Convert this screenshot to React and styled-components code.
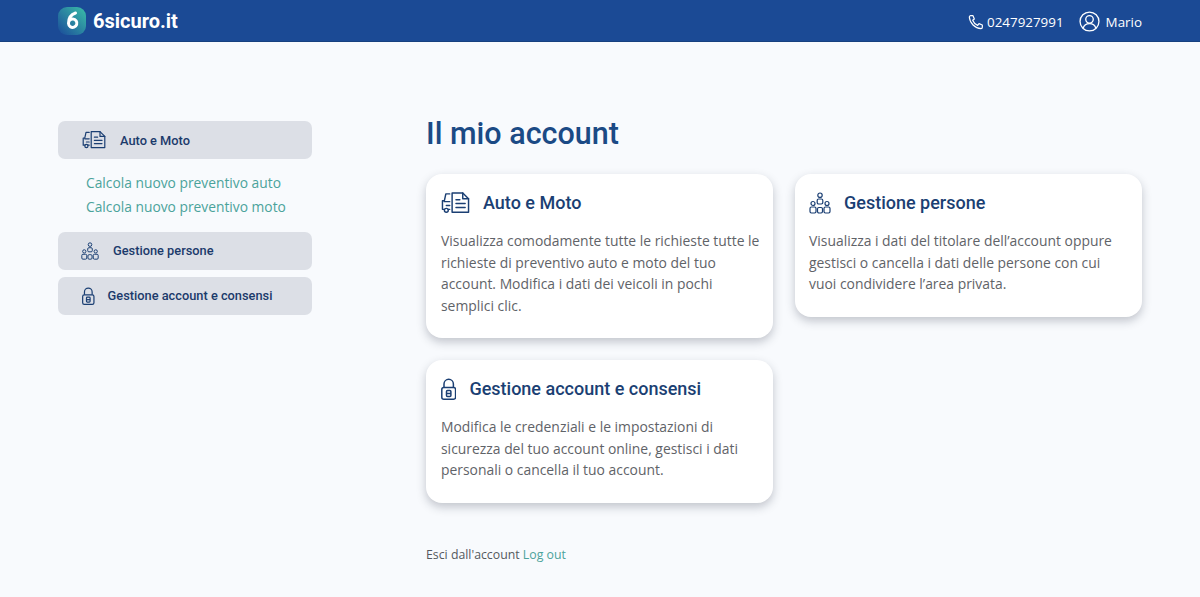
import React from 'react';
import styled, { createGlobalStyle } from 'styled-components';

const GlobalStyle = createGlobalStyle`
  html, body {
    margin: 0;
    padding: 0;
    background: #f8fafd;
  }
  body {
    font-family: "Open Sans", "Noto Sans", sans-serif;
  }
`;

const Page = styled.div`
  width: 1200px;
  height: 597px;
  overflow: hidden;
  background: #f8fafd;
`;

const Header = styled.header`
  height: 42px;
  box-sizing: border-box;
  background: #1b4a95;
  border-bottom: 1px solid #17407f;
  padding: 0 58px;
  display: flex;
  align-items: center;
  justify-content: space-between;
`;

const Brand = styled.div`
  display: flex;
  align-items: center;
  gap: 7px;
  color: #fff;
  font-family: "Roboto", sans-serif;
  font-weight: 700;
  font-size: 20px;
`;

const HeaderRight = styled.div`
  display: flex;
  align-items: center;
  color: #fff;
  font-size: 13.4px;
  gap: 15px;
  margin-top: 2px;
`;

const HeaderItem = styled.div`
  display: flex;
  align-items: center;
  gap: ${props => props.$gap}px;
`;

const Body = styled.main`
  display: flex;
  padding: 0 58px;
`;

const Sidebar = styled.aside`
  width: 254px;
  flex-shrink: 0;
  padding-top: 79px;
  margin-right: 114px;
`;

const NavButton = styled.div`
  height: 38px;
  border-radius: 7px;
  background: #dcdfe6;
  display: flex;
  align-items: center;
  gap: ${props => props.$gap}px;
  padding-left: ${props => props.$pad}px;
  margin-bottom: 7px;
  color: #1b3a6b;
  font-family: "Roboto", sans-serif;
  font-weight: 500;
  font-size: 12.8px;
`;

const SubLinks = styled.div`
  display: flex;
  flex-direction: column;
  gap: 3px;
  padding: 6px 0 14.5px 28px;
`;

const SubLink = styled.a`
  color: #4ba39b;
  font-size: 13.8px;
  line-height: 21px;
`;

const Content = styled.section`
  width: 716px;
  padding-top: 71px;
`;

const Title = styled.h1`
  margin: 0 0 19px;
  color: #1b4a85;
  font-family: "Roboto", sans-serif;
  font-weight: 500;
  font-size: 30.5px;
  line-height: 42px;
`;

const Grid = styled.div`
  display: grid;
  grid-template-columns: 347px 347px;
  gap: 22px;
  align-items: start;
`;

const Card = styled.article`
  background: #fff;
  border-radius: 16px;
  box-shadow: 0 4px 10px rgba(30, 40, 60, 0.25);
  padding: 15px 13px 22px ${props => props.$pad}px;
`;

const CardHead = styled.div`
  display: flex;
  align-items: center;
  gap: ${props => props.$gap}px;
  height: 27px;
  margin-bottom: 14px;
`;

const CardTitle = styled.h2`
  margin: 0;
  color: #1b3f73;
  font-family: "Roboto", sans-serif;
  font-weight: 500;
  font-size: 18px;
`;

const CardText = styled.p`
  margin: 0;
  color: #5f6368;
  font-size: 13.9px;
  line-height: 21.5px;
`;

const Footer = styled.div`
  margin-top: 43px;
  color: #55595e;
  font-size: 12.3px;
`;

const FooterLink = styled.a`
  color: #4ba39b;
`;

const Logo = () => (
  <svg width="28" height="28" viewBox="0 0 28 28">
    <defs>
      <linearGradient id="lg" x1="0" y1="1" x2="1" y2="0">
        <stop offset="0" stopColor="#1a4a9a" />
        <stop offset="1" stopColor="#3bbfa8" />
      </linearGradient>
    </defs>
    <rect width="28" height="28" rx="9" fill="url(#lg)" />
    <path d="M17.500 6c-4.500 1.500-7 5.500-7 10.500a4.200 4.200 0 1 0 1-3" fill="none" stroke="#fff" strokeWidth="3" strokeLinecap="round" />
  </svg>
);

const DocsIcon = ({ size = 28 }) => (
  <svg width={size} height={size * 0.8} viewBox="0 0 30 24" fill="none" stroke="#1b3f73" strokeWidth="1.5" strokeLinejoin="round" strokeLinecap="round">
    <path d="M11.500 2v20h17V8l-6-6z" />
    <path d="M22.500 2v6h6M15.500 9h4M15.500 13h9.500M15.500 17h9.500" />
    <path d="M9 3H5L3.500 10H1.500v9h2M7.500 19H9M3.500 11H9M5.500 15H9" />
    <circle cx="5.500" cy="20" r="2" />
  </svg>
);

const PeopleIcon = ({ size = 22 }) => (
  <svg width={size} height={size} viewBox="0 0 22 22" fill="none" stroke="#1b3f73" strokeWidth="1.200">
    <circle cx="11" cy="3.200" r="2.200" />
    <rect x="8.200" y="7" width="5.600" height="5" rx="1.400" />
    <circle cx="4" cy="11.500" r="2" />
    <circle cx="18" cy="11.500" r="2" />
    <rect x="1" y="15" width="6" height="6" rx="1.400" />
    <rect x="15" y="15" width="6" height="6" rx="1.400" />
    <rect x="8.500" y="15.500" width="5" height="5.500" rx="1.400" />
  </svg>
);

const LockIcon = ({ size = 22 }) => (
  <svg width={size * 0.7} height={size} viewBox="0 0 15.400 22" fill="none" stroke="#1b3f73" strokeWidth="1.5">
    <path d="M3 9.500V6a4.700 4.700 0 0 1 9.400 0v3.500" />
    <rect x="0.800" y="9.500" width="13.800" height="11.700" rx="2" />
    <rect x="5.500" y="12.500" width="4.400" height="6" rx="1" />
    <path d="M5.500 15.500h4.400" />
  </svg>
);

const PhoneIcon = () => (
  <svg width="16" height="16" viewBox="0 0 24 24" fill="none" stroke="#fff" strokeWidth="1.8" strokeLinecap="round" strokeLinejoin="round">
    <path d="M4 2.500h3.500l2 5-2.500 2a13 13 0 0 0 7.500 7.500l2-2.500 5 2V20c0 1.200-1 2-2 2C10.500 21.500 2.500 13.500 2 4.500c0-1 1-2 2-2z" />
  </svg>
);

const UserIcon = () => (
  <svg width="21" height="21" viewBox="0 0 24 24" fill="none" stroke="#fff" strokeWidth="1.500">
    <circle cx="12" cy="12" r="10.800" />
    <circle cx="12" cy="9.500" r="4.300" />
    <path d="M4.800 19.500c1-3.500 3.500-5 7.200-5s6.200 1.500 7.200 5" />
  </svg>
);

const cards = [
  {
    title: 'Auto e Moto',
    icon: <DocsIcon size={29} />,
    pad: 15,
    gap: 13,
    text: 'Visualizza comodamente tutte le richieste tutte le richieste di preventivo auto e moto del tuo account. Modifica i dati dei veicoli in pochi semplici clic.',
  },
  {
    title: 'Gestione persone',
    icon: <PeopleIcon />,
    pad: 14,
    gap: 13,
    text: 'Visualizza i dati del titolare dell’account oppure gestisci o cancella i dati delle persone con cui vuoi condividere l’area privata.',
  },
  {
    title: 'Gestione account e consensi',
    icon: <LockIcon />,
    pad: 15,
    gap: 13,
    text: 'Modifica le credenziali e le impostazioni di sicurezza del tuo account online, gestisci i dati personali o cancella il tuo account.',
  },
];

const App = () => (
  <Page>
    <GlobalStyle />
    <Header>
      <Brand>
        <Logo />
        6sicuro.it
      </Brand>
      <HeaderRight>
        <HeaderItem $gap={3}>
          <PhoneIcon />
          0247927991
        </HeaderItem>
        <HeaderItem $gap={6}>
          <UserIcon />
          Mario
        </HeaderItem>
      </HeaderRight>
    </Header>
    <Body>
      <Sidebar>
        <NavButton $pad={24} $gap={14}>
          <DocsIcon size={24} />
          Auto e Moto
        </NavButton>
        <SubLinks>
          <SubLink>Calcola nuovo preventivo auto</SubLink>
          <SubLink>Calcola nuovo preventivo moto</SubLink>
        </SubLinks>
        <NavButton $pad={23} $gap={14}>
          <PeopleIcon size={18} />
          Gestione persone
        </NavButton>
        <NavButton $pad={24} $gap={13}>
          <LockIcon size={18} />
          Gestione account e consensi
        </NavButton>
      </Sidebar>
      <Content>
        <Title>Il mio account</Title>
        <Grid>
          {cards.map(card => (
            <Card key={card.title} $pad={card.pad}>
              <CardHead $gap={card.gap}>
                {card.icon}
                <CardTitle>{card.title}</CardTitle>
              </CardHead>
              <CardText>{card.text}</CardText>
            </Card>
          ))}
        </Grid>
        <Footer>
          Esci dall'account <FooterLink>Log out</FooterLink>
        </Footer>
      </Content>
    </Body>
  </Page>
);

export default App;
